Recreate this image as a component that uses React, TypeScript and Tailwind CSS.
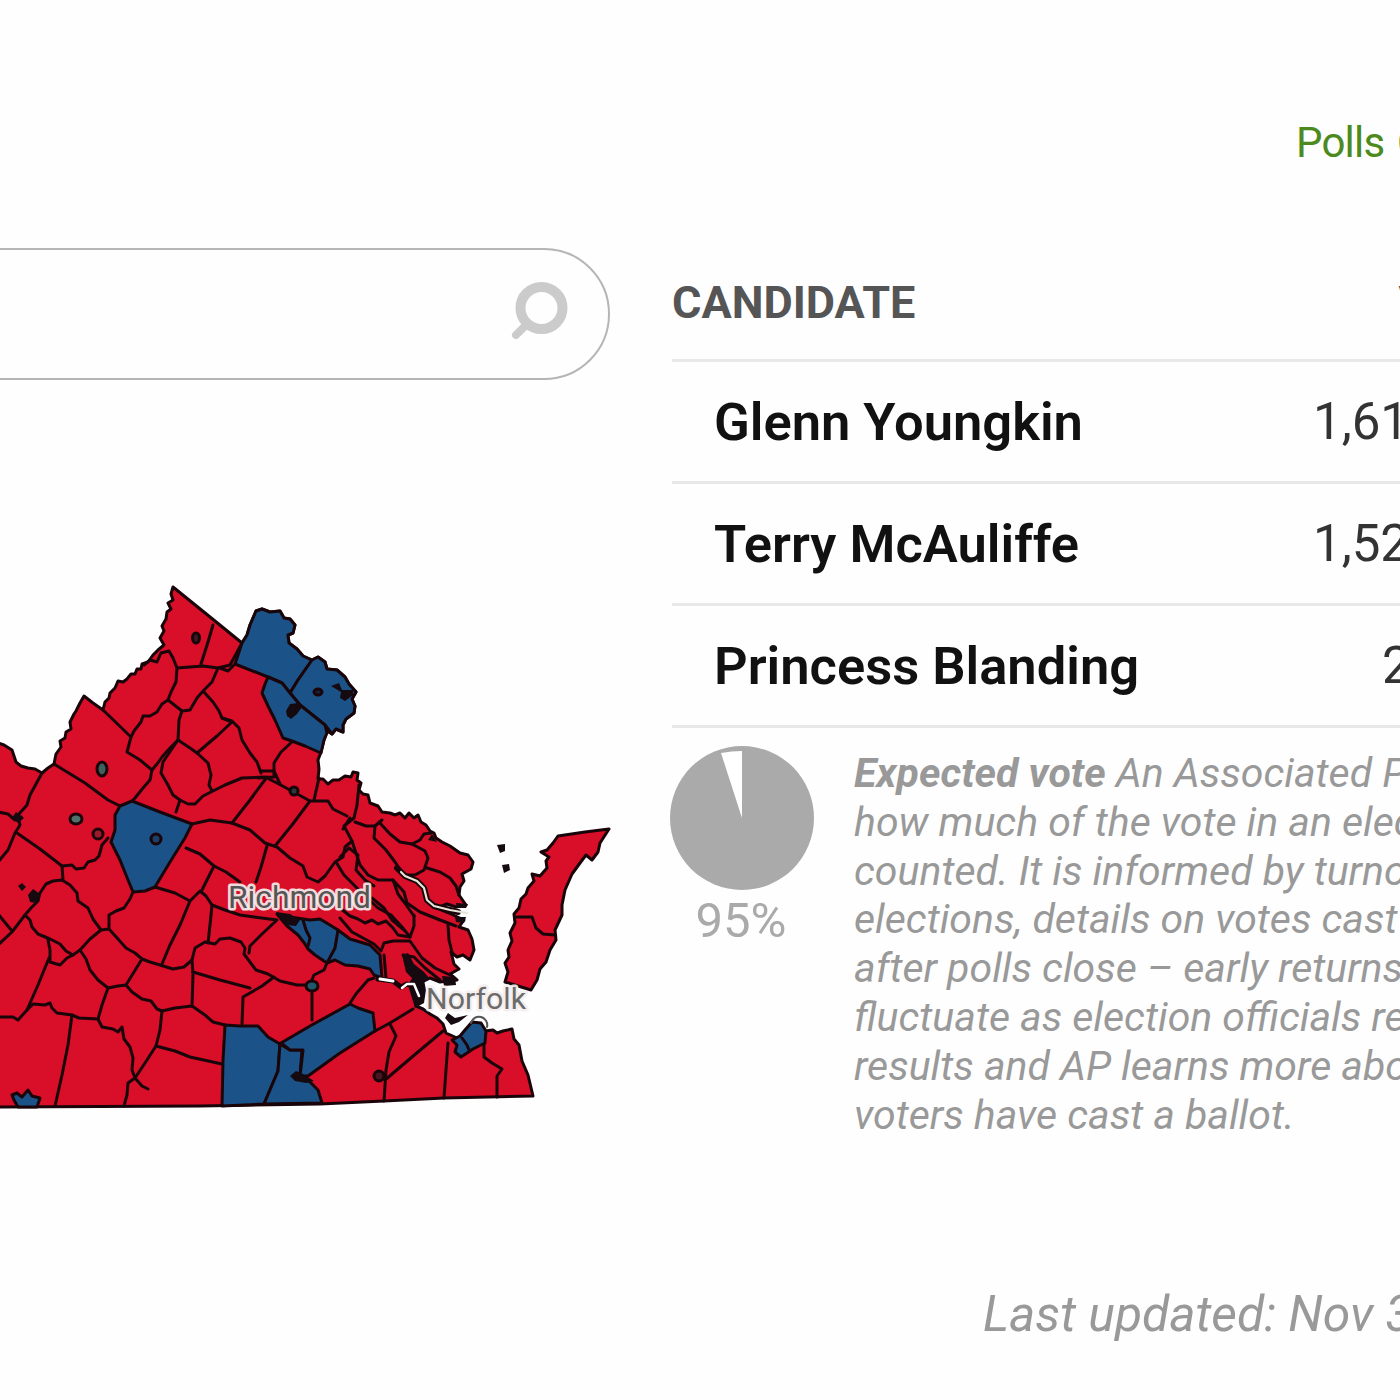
type Candidate = {
  name: string;
  votes: string;
};

const RED = "#d90e28";
const BLUE = "#1b5288";

const candidates: Candidate[] = [
  { name: "Glenn Youngkin", votes: "1,61" },
  { name: "Terry McAuliffe", votes: "1,52" },
  { name: "Princess Blanding", votes: "2" },
];

const explainer = [
  "how much of the vote in an elec",
  "counted. It is informed by turno",
  "elections, details on votes cast",
  "after polls close – early returns",
  "fluctuate as election officials re",
  "results and AP learns more abo",
  "voters have cast a ballot.",
];

const mainland =
  "-5,742 4,745 12,750 16,762 21,766 28,768 35,769 42,773 48,768 54,764 56,754 61,747 60,741 65,738 66,732 71,729 70,722 74,714 76,711 80,703 84,696 93,703 103,710 105,702 109,698 110,693 115,688 118,681 123,682 127,679 131,674 135,674 137,669 141,669 142,664 148,662 153,655 158,650 164,645 160,638 164,631 162,626 166,619 167,612 171,609 168,603 173,600 171,594 173,587 215,621 242,643 247,635 250,625 256,611 262,609 270,612 280,611 284,618 290,619 295,625 293,633 288,635 289,643 297,649 303,656 312,660 318,657 325,662 327,669 337,670 345,677 349,684 356,692 352,699 355,706 354,713 346,719 343,725 343,732 336,729 332,734 327,731 324,740 321,752 318,760 319,769 318,779 323,779 328,784 333,780 339,780 345,776 351,777 353,772 358,773 357,780 361,783 359,790 363,794 368,795 370,803 378,806 382,812 390,813 395,815 400,813 405,818 409,813 414,818 418,815 421,822 426,825 430,831 434,833 436,838 442,842 450,846 460,853 468,855 473,862 471,869 462,874 464,881 460,887 459,895 466,905 456,907 447,904 437,908 449,913 464,920 459,927 468,930 472,939 474,950 470,960 463,955 457,957 451,952 454,964 459,969 450,974 457,980 440,982 430,978 420,983 415,990 416,1006 423,1009 430,1014 437,1018 443,1024 446,1033 457,1038 470,1032 485,1031 493,1030 497,1033 503,1031 512,1029 514,1039 519,1045 522,1061 528,1075 533,1096 444,1098 384,1101 320,1104 200,1106 -5,1107";

const blueCounties = [
  "120,806 132,801 160,812 192,824 185,838 170,862 155,887 145,891 133,892 128,880 120,860 111,842 115,830 115,815",
  "235,664 242,643 247,635 250,625 256,611 262,609 270,612 280,611 284,618 290,619 295,625 293,633 288,635 289,643 297,649 303,656 312,660 298,680 290,693 282,683 268,677",
  "312,660 318,657 325,662 327,669 337,670 345,677 349,684 356,692 352,699 355,706 354,713 346,719 343,725 343,732 336,729 332,734 325,725 300,705 290,693 298,680",
  "268,677 282,683 290,693 300,705 325,725 327,733 324,740 321,753 305,746 292,741 283,738 275,720 268,706 262,693 265,684",
  "277,914 290,917 310,920 320,919 330,925 338,930 350,939 370,945 380,955 382,978 374,975 370,969 358,966 345,965 335,960 327,963 315,955 308,949 305,944 298,935 287,926",
  "225,1025 240,1026 258,1026 268,1037 280,1044 278,1071 264,1104 222,1106 223,1060",
  "280,1044 290,1050 302,1050 300,1076 310,1082 318,1090 322,1103 264,1104 278,1071",
  "281,1043 310,1026 350,1004 358,1008 373,1013 375,1031 340,1053 308,1076 300,1076 303,1050 290,1050",
  "452,1040 460,1036 465,1030 472,1022 481,1023 486,1031 485,1043 473,1049 461,1057 455,1052 457,1045",
  "14,1100 12,1095 17,1093 22,1097 28,1090 32,1096 40,1098 37,1107 18,1107",
];

const borders = [
  // Shenandoah valley and the Blue Ridge
  "103,710 131,737 134,731 141,722 143,716 150,716 157,712 162,704 168,700",
  "131,737 127,752 140,760 152,770 150,780 143,788 135,798 131,802",
  "152,770 157,764 162,757 170,748 178,740",
  "54,764 85,783 108,800 120,806",
  "42,773 30,795 27,805 18,815 20,825 15,833 8,850 -2,862",
  "-2,812 8,814 15,820 21,817",
  "17,833 40,849 62,866 63,880",
  "62,866 72,865 76,869 84,868 88,862 95,860 99,856 102,845 108,838",
  "25,915 31,908 38,901 40,893 46,884 53,881 62,880 70,885 77,893 78,901 88,908 93,919 101,930 109,929 109,915 116,911 124,908 130,899 133,892",
  "25,915 30,920 32,927 38,934 50,939 60,944 66,951 73,955 80,950 90,939 101,930",
  "25,915 12,932 -2,945",
  "-2,914 12,931",
  "48,940 50,950 50,962 60,965 67,958 73,955",
  "49,958 38,985 27,1010 18,1020 13,1017 -2,1017",
  "27,1010 33,1004 45,1005 50,1003 52,1008 57,1013 72,1015 79,1018 98,1019 102,1005 108,988",
  "80,950 86,959 90,970 98,980 108,988 118,986 126,985 134,972 142,959",
  "109,929 118,939 126,948 135,953 142,959 150,962 160,965 173,969 184,967 192,960",
  "126,985 132,992 142,999 151,1001 157,1009 162,1011 160,1030 156,1046 145,1063 135,1078",
  "98,1019 102,1027 113,1029 118,1032 122,1027 124,1039 130,1047 133,1058 132,1070 135,1078 142,1086 148,1089",
  "135,1078 128,1083 127,1095 124,1106",
  "72,1015 68,1045 62,1075 55,1106",
  "162,1011 175,1008 192,1006",
  "156,1046 175,1051 190,1057 222,1064",
  "192,1006 193,975 192,960 195,948 205,942 215,944 220,939 230,938 241,942 245,948 244,954 256,970 268,974 280,981 297,985 308,985",
  "192,1006 205,1015 213,1022 225,1025",
  "193,972 220,980 250,988",
  "155,887 175,893 190,901 180,925 170,945 162,964",
  "190,901 200,891 206,896 212,905 210,925 208,943",
  "212,905 225,910 240,915 277,920 262,934 250,946 249,953",
  "274,977 262,986 243,997 242,1024",
  "186,848 200,854 214,866 202,890",
  "214,866 226,872 240,882",
  // Piedmont
  "176,812 180,800 188,804 195,804 203,796 225,785 242,778 265,777 277,783 290,790 310,801 328,801 333,809 347,816",
  "192,824 210,820 232,823 250,830 265,843 277,847 290,858 303,866 307,877 318,882 325,876 335,862 343,857 345,847 352,841",
  "267,777 250,800 232,823",
  "310,801 292,825 275,846",
  "267,846 261,867 256,882",
  "178,740 163,762 161,773 168,785 173,795 180,800",
  "178,740 190,748 197,753 208,763 211,775 209,785 212,791",
  "168,700 171,692 176,682 177,668 173,658 169,651 161,653 157,662 150,660 144,665",
  "177,668 190,667 203,666 218,668 230,665 242,643",
  "213,625 208,642 201,664",
  "218,668 212,682 204,690 197,698 190,710 182,711 168,700",
  "182,711 179,720 178,740",
  "204,692 213,702 219,711 222,718 232,722 217,736 197,753",
  "222,718 232,721 239,728 242,740 250,753 257,762 261,773",
  "235,664 228,671 220,668",
  "261,771 274,771 274,763 281,752 293,741",
  "258,778 274,777 274,771 280,784",
  "319,778 314,800",
  // Northern Neck and the Middle Peninsula
  "359,785 357,805 354,818 344,826 352,841 355,850 360,865 368,875 378,880 393,880 404,892 407,903 420,912 440,920 456,926",
  "355,822 366,826 375,826 382,820",
  "375,826 374,838 386,850 395,862 403,874",
  "379,822 390,834 400,842 412,844 420,840 424,834 431,833",
  "412,844 425,851 428,858 424,870 415,875 403,875",
  "427,868 440,872 450,878 456,886 459,895",
  "343,829 350,818",
  "340,857 349,848 358,855 356,870 365,880 374,886",
  "336,862 344,875 362,893 378,908 391,915 402,927 410,937 414,926 414,915",
  "393,880 398,894 404,902 414,916",
  "340,908 350,916 358,919 365,923 372,920 378,924 386,921 393,928 398,935 410,937",
  "340,918 352,932 374,944 381,951 384,943 393,941 409,941",
  "410,941 422,958 435,968 450,975",
  "448,925 449,940 452,952",
  "403,955 414,957 425,968 440,980",
  "384,955 386,978",
  "372,898 384,908 392,920 404,930",
  // Southside and Tidewater
  "312,990 312,1020",
  "350,1003 356,994 368,980 374,978",
  "327,963 324,970 314,975 311,982",
  "375,1031 390,1023 413,1009",
  "390,1024 396,1036 389,1052 386,1070 384,1101",
  "385,1080 412,1057 443,1031",
  "448,1043 446,1070 444,1098",
  "484,1044 484,1057 492,1063 502,1069 497,1076 497,1097",
];

const cities = [
  { cx: 102, cy: 769, rx: 5, ry: 7, fill: "#40605c" },
  { cx: 76, cy: 819, rx: 6, ry: 5, fill: "#50706c" },
  { cx: 98, cy: 834, rx: 5, ry: 5, fill: "#a0182c" },
  { cx: 156, cy: 839, rx: 5, ry: 5, fill: "#1b4068" },
  { cx: 196, cy: 638, rx: 3.5, ry: 5, fill: "#3c1c24" },
  { cx: 294, cy: 791, rx: 4, ry: 4, fill: "#2a3a38" },
  { cx: 312, cy: 986, rx: 6, ry: 5, fill: "#1f5a6c" },
  { cx: 379, cy: 1076, rx: 5, ry: 5, fill: "#4a1420" },
  { cx: 318, cy: 692, rx: 4, ry: 3, fill: "#14243c" },
];

// Small independent cities that fill in solid at this scale
const spots = [
  "286,711 290,704 298,703 302,707 297,714 291,719 287,716",
  "331,686 339,683 342,690 353,690 353,695 345,701 340,698 341,692",
  "290,1076 296,1071 303,1074 314,1081 306,1083 295,1081",
  "28,895 33,889 40,894 36,903 30,902",
  "18,886 22,883 26,887 22,891",
  "445,1018 448,1013 455,1018 468,1015 459,1022 451,1025",
  "497,845 505,844 505,851 500,853",
  "502,865 509,864 510,870 504,873",
  "402,955 408,953 414,964 424,972 430,979 418,984 406,972",
  "408,985 414,975 424,980 426,990 424,1003 415,1008",
  "276,912 290,914 300,920 296,926 286,925",
  "12,818 16,812 24,818 18,823",
  "432,834 437,842 428,840",
  "456,903 468,904 466,908 457,908",
  "455,917 466,917 464,923 456,922",
  "442,976 455,977 456,985 444,986",
];

function VirginiaMap() {
  return (
    <svg
      className="block h-[540px] w-[630px]"
      viewBox="0 580 630 540"
      strokeLinejoin="round"
      strokeLinecap="round"
    >
      <g stroke="#190509" strokeWidth="3">
        <polygon points={mainland} fill={RED} />
        <g fill="none">
          {borders.map((points) => (
            <polyline key={points} points={points} />
          ))}
        </g>
        {blueCounties.map((points) => (
          <polygon key={points} points={points} fill={BLUE} />
        ))}
        <g fill="none">
          <polyline points="303,920 306,930 310,938 308,946" />
          <polyline points="338,930 335,948 327,963" />
          <polyline points="462,1038 467,1045 469,1050" />
        </g>
        <polygon
          fill={RED}
          points="609,829 585,832 558,836 553,843 547,850 541,852 549,857 546,861 547,868 540,876 532,874 534,881 528,888 526,894 521,899 519,908 514,914 515,923 510,933 512,941 508,950 509,957 505,963 508,972 505,982 531,990 537,980 540,969 546,962 550,950 556,940 555,930 562,915 562,905 565,890 572,874 580,863 586,855 592,860 598,852 600,843"
        />
        <polyline
          points="517,917 532,917 536,928 543,934 555,935"
          fill="none"
        />
        {cities.map((city) => (
          <ellipse key={city.cx} {...city} />
        ))}
      </g>
      {spots.map((points) => (
        <polygon key={points} points={points} fill="#150a10" />
      ))}
      <g fill="none">
        <polyline
          points="397,868 405,876 417,881 424,888 427,900 434,906 450,910 458,912"
          stroke="#190509"
          strokeWidth="6"
        />
        <polyline
          points="401,872 405,876 417,881 424,888 427,900 434,906 450,910 467,913"
          stroke="#e9e4d8"
          strokeWidth="2.2"
        />
        <polyline
          points="378,979 393,981 401,987 407,984 412,986"
          stroke="#190509"
          strokeWidth="5"
        />
        <polyline points="380,979 393,981" stroke="#fff" strokeWidth="3" />
        <polyline
          points="402,988 407,984 414,984 419,996"
          stroke="#fff"
          strokeWidth="2.5"
        />
      </g>
      <path
        d="M471 1023 A8 8 0 0 1 487 1027"
        fill="none"
        stroke="#555"
        strokeWidth="2"
      />
      <g
        className="font-['Roboto']"
        fill="#555"
        stroke="#f5eeee"
        strokeOpacity="0.92"
        strokeWidth="5"
        paintOrder="stroke"
        fontSize="31"
      >
        <text x="228" y="908" textLength="143" lengthAdjust="spacingAndGlyphs">
          Richmond
        </text>
        <text
          x="426"
          y="1009"
          textLength="100"
          lengthAdjust="spacingAndGlyphs"
          fontSize="30"
          fill="#6b6b6b"
        >
          Norfolk
        </text>
      </g>
    </svg>
  );
}

function SearchBox() {
  return (
    <div className="-ml-20 flex h-[132px] w-[690px] items-center justify-end rounded-full border-2 border-[#b5b5b5] pr-[38px]">
      <svg className="mb-1.5 h-[60px] w-[60px]" viewBox="0 0 60 60" fill="none">
        <circle cx="31.5" cy="27" r="21" stroke="#cbcbcb" strokeWidth="10" />
        <path
          d="M16 44 6 54"
          stroke="#cbcbcb"
          strokeWidth="8"
          strokeLinecap="round"
        />
      </svg>
    </div>
  );
}

function ExpectedVote() {
  return (
    <div className="flex">
      <div className="w-[182px] shrink-0 pt-[18px]">
        <svg className="-ml-0.5 block h-[144px] w-[144px]" viewBox="0 0 144 144">
          <circle cx="72" cy="72" r="72" fill="#aaa" />
          <path d="M72 72 51 7 Q62 5 72 5Z" fill="#fff" />
        </svg>
        <div className="w-[138px] text-center text-[49px] leading-[62px] text-[#aaa]">
          95%
        </div>
      </div>
      <div className="pt-[21px] text-[41px] leading-[48.8px] text-[#999] italic">
        <div>
          <b>Expected vote</b> An Associated P
        </div>
        {explainer.map((line) => (
          <div key={line}>{line}</div>
        ))}
      </div>
    </div>
  );
}

export default function App() {
  return (
    <div className="flex h-[1400px] w-[1400px] overflow-hidden bg-[#fefefe] font-['Roboto',sans-serif] whitespace-nowrap">
      <div className="w-[672px] shrink-0 pt-[248px]">
        <SearchBox />
        <div className="pt-[200px]">
          <VirginiaMap />
        </div>
      </div>

      <div className="w-[728px] shrink-0">
        <div className="h-[245px] pt-[119px] pl-[624px] text-[42px] leading-[48px] tracking-[-0.8px] text-[#4c8a1e] [word-spacing:3px]">
          Polls C
        </div>
        <div className="flex h-[117px] items-center justify-between border-b-[3px] border-[#e8e8e8] pt-0.5 text-[45px] font-bold text-[#555]">
          <span>CANDIDATE</span>
          <span className="w-0.5 shrink-0 font-normal">V</span>
        </div>
        {candidates.map((c) => (
          <div
            key={c.name}
            className="flex h-[122px] items-center border-b-[3px] border-[#e8e8e8] pt-px pl-[42px]"
          >
            <span className="w-[599px] shrink-0 text-[52.5px] font-semibold text-[#111]">
              {c.name}
            </span>
            <span
              className={
                c.votes.length > 1
                  ? "text-[51px] text-[#333]"
                  : "pl-[69px] text-[51px] text-[#333]"
              }
            >
              {c.votes}
            </span>
          </div>
        ))}
        <ExpectedVote />
        <div className="pt-[148px] pl-[311px] text-[49.8px] leading-[54px] text-[#999] italic">
          Last updated: Nov 3
        </div>
      </div>
    </div>
  );
}
